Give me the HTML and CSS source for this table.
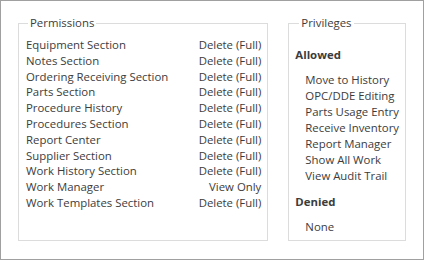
FILE: index.html
```html
<!DOCTYPE html>
<html lang="en">
<head>
    <meta charset="UTF-8">
    <title>Security Summary</title>
    <link rel="stylesheet" href="styles.css">
</head>
<body>
    <div class="panel">
        <!-- Permissions list -->
        <fieldset class="group permissions">
            <legend>Permissions</legend>
            <div class="perm-row"><span>Equipment Section</span><span>Delete (Full)</span></div>
            <div class="perm-row"><span>Notes Section</span><span>Delete (Full)</span></div>
            <div class="perm-row"><span>Ordering Receiving Section</span><span>Delete (Full)</span></div>
            <div class="perm-row"><span>Parts Section</span><span>Delete (Full)</span></div>
            <div class="perm-row"><span>Procedure History</span><span>Delete (Full)</span></div>
            <div class="perm-row"><span>Procedures Section</span><span>Delete (Full)</span></div>
            <div class="perm-row"><span>Report Center</span><span>Delete (Full)</span></div>
            <div class="perm-row"><span>Supplier Section</span><span>Delete (Full)</span></div>
            <div class="perm-row"><span>Work History Section</span><span>Delete (Full)</span></div>
            <div class="perm-row"><span>Work Manager</span><span>View Only</span></div>
            <div class="perm-row"><span>Work Templates Section</span><span>Delete (Full)</span></div>
        </fieldset>

        <!-- Privileges list -->
        <fieldset class="group privileges">
            <legend>Privileges</legend>
            <div class="priv-heading">Allowed</div>
            <ul class="priv-list">
                <li>Move to History</li>
                <li>OPC/DDE Editing</li>
                <li>Parts Usage Entry</li>
                <li>Receive Inventory</li>
                <li>Report Manager</li>
                <li>Show All Work</li>
                <li>View Audit Trail</li>
            </ul>
            <div class="priv-heading">Denied</div>
            <ul class="priv-list">
                <li>None</li>
            </ul>
        </fieldset>
    </div>
</body>
</html>
```

FILE: styles.css
```css
/* Reset */
* {
    margin: 0;
    padding: 0;
    box-sizing: border-box;
}

body {
    font-family: 'Open Sans', 'Noto Sans', sans-serif;
    font-size: 11.4px;
    line-height: 16px;
    color: #3c3c3c;
    background: #ffffff;
}

/* Outer window frame */
.panel {
    width: 424px;
    height: 260px;
    border: 1px solid #a0a0a0;
    padding: 14px 17px 18px 17px;
    display: flex;
    gap: 20px;
}

/* Group boxes */
.group {
    border: 1px solid #dcdcdc;
    height: 100%;
}

.group legend {
    padding: 0 2px;
    color: #3c3c3c;
}

.permissions {
    width: 251px;
    padding: 6px 6px 0 7px;
}

.permissions legend {
    margin-left: 2px;
}

.privileges {
    width: 118px;
    padding: 16px 4px 0 6px;
}

.privileges legend {
    margin-left: 4px;
}

/* Permission rows */
.perm-row {
    display: flex;
    justify-content: space-between;
    height: 15.8px;
    white-space: nowrap;
}

/* Privilege lists */
.priv-heading {
    font-weight: bold;
    margin-bottom: 9px;
}

.priv-list {
    list-style: none;
    padding-left: 10px;
    margin-bottom: 10px;
    white-space: nowrap;
}
```
